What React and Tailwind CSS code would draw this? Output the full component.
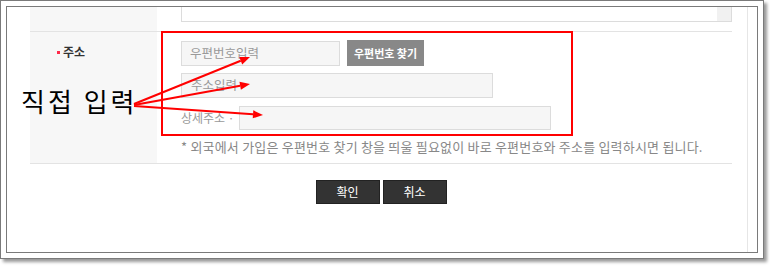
import React from 'react';

// red annotation arrow: line + filled head
const Arrow = ({ x1, y1, x2, y2 }) => {
  const dx = x2 - x1;
  const dy = y2 - y1;
  const len = Math.hypot(dx, dy);
  const ux = dx / len;
  const uy = dy / len;
  const L = 10;
  const W = 4;
  const bx = x2 - ux * L;
  const by = y2 - uy * L;
  const pts = `${x2},${y2} ${bx - uy * W},${by + ux * W} ${bx + uy * W},${by - ux * W}`;
  return (
    <g>
      <line x1={x1} y1={y1} x2={bx} y2={by} stroke="#ff0000" strokeWidth="2" />
      <polygon points={pts} fill="#ff0000" />
    </g>
  );
};

const App = () => {
  return (
    <div
      className="relative w-[770px] h-[267px] bg-white overflow-hidden"
      style={{ fontFamily: '"Noto Sans CJK KR", "Noto Sans", sans-serif' }}
    >
      {/* captured window frame */}
      <div className="w-[764px] h-[259px] border border-[#7a7a7a] bg-white p-[5px] shadow-[3px_3px_3px_rgba(0,0,0,0.4)]">
        <div className="h-full border border-[#7a7a7a] flex">
          <div className="w-[740px] pl-[23px]">
            <div className="w-[702px]">
              {/* previous row (cut off) */}
              <div className="flex border-b border-[#e3e3e3]">
                <div className="w-[127px] h-[24px] bg-[#f7f7f7]"></div>
                <div className="flex-1 pl-[24px]">
                  <div className="h-[15px] border-x border-b border-[#dcdcdc] bg-white flex justify-end">
                    <div className="w-[14px] h-full bg-[#f1f1f1]"></div>
                  </div>
                </div>
              </div>

              {/* address row */}
              <div className="flex border-b border-[#e3e3e3]">
                <div className="w-[127px] bg-[#f7f7f7] pl-[27px] pt-[11px]">
                  <div className="flex items-center h-[18px] text-[12px] font-bold text-[#333]">
                    <span className="w-[3px] h-[3px] bg-[#ff2a4a] mr-[3px]"></span>
                    주소
                  </div>
                </div>
                <div className="flex-1 pl-[24px] pt-[8px] pb-[7px]">
                  <div className="flex items-center h-[26px]">
                    <div className="w-[159px] h-[25px] border border-[#dcdcdc] bg-[#f6f6f6] pl-[8px] flex items-center text-[12.5px] text-[#999]">
                      우편번호입력
                    </div>
                    <div className="ml-[7px] w-[77px] h-[26px] bg-[#888] flex items-center justify-center text-[11px] font-bold text-white">
                      우편번호 찾기
                    </div>
                  </div>
                  <div className="mt-[7px] w-[312px] h-[25px] border border-[#dcdcdc] bg-[#f6f6f6] pl-[9px] flex items-center text-[12.5px] text-[#999]">
                    주소입력
                  </div>
                  <div className="mt-[8px] flex items-center h-[24px]">
                    <span className="w-[58px] text-[12px] text-[#999]">상세주소 ·</span>
                    <div className="w-[312px] h-[24px] border border-[#dcdcdc] bg-[#f6f6f6]"></div>
                  </div>
                  <p className="mt-[8px] h-[18px] leading-[18px] text-[13px] tracking-[0.2px] text-[#888] whitespace-nowrap">
                    * 외국에서 가입은 우편번호 찾기 창을 띄울 필요없이 바로 우편번호와 주소를 입력하시면 됩니다.
                  </p>
                </div>
              </div>

              {/* buttons */}
              <div className="mt-[16px] flex justify-center gap-[3px]">
                <button className="w-[64px] h-[24px] bg-[#333] border border-[#222] text-white text-[12px]">확인</button>
                <button className="w-[64px] h-[24px] bg-[#333] border border-[#222] text-white text-[12px]">취소</button>
              </div>
            </div>
          </div>
          <div className="flex-1 border-l border-[#e6e6e6]"></div>
        </div>
      </div>

      {/* annotation overlay */}
      <svg className="absolute left-0 top-0" width="770" height="267">
        <rect x="162" y="32" width="410" height="103" fill="none" stroke="#ff0000" strokeWidth="2" />
        <Arrow x1={134} y1={104} x2={250} y2={57} />
        <Arrow x1={134} y1={105} x2={250} y2={84} />
        <Arrow x1={134} y1={106} x2={263} y2={115} />
      </svg>
      <div className="absolute left-[21px] top-[86px] text-[26px] leading-[30px] tracking-[3px] text-black">직접 입력</div>
    </div>
  );
};

export default App;
